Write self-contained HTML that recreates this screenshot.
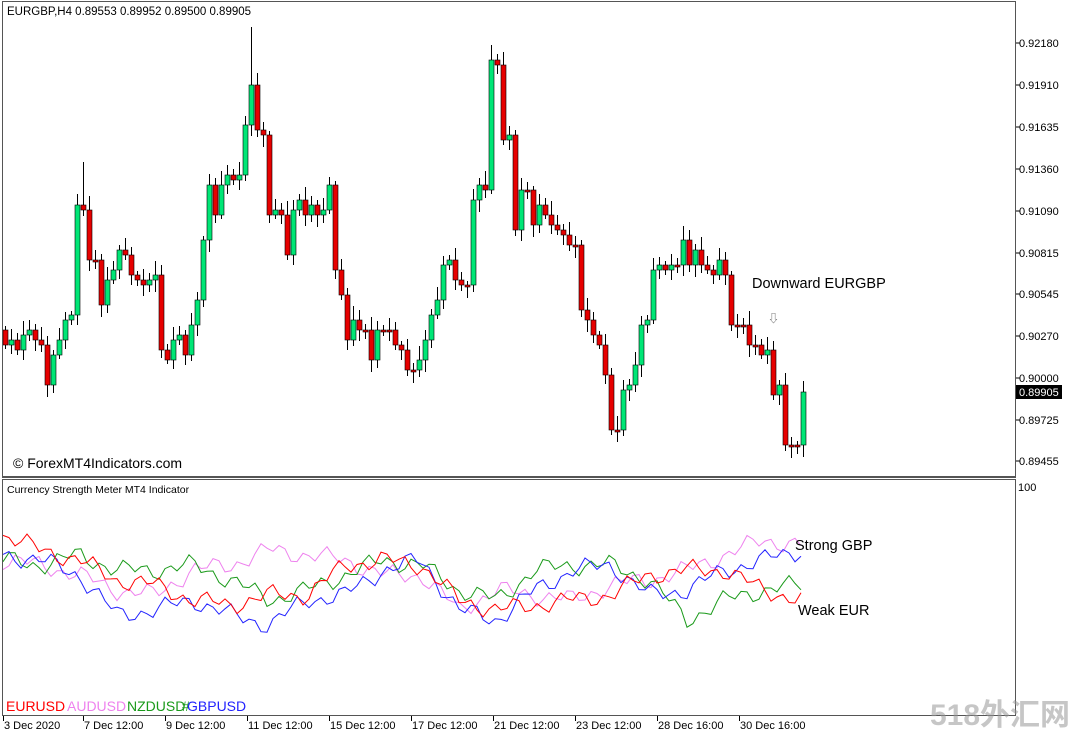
<!DOCTYPE html>
<html><head><meta charset="utf-8"><style>
html,body{margin:0;padding:0;background:#fff;width:1068px;height:736px;overflow:hidden}
svg{display:block}
text{font-family:"Liberation Sans","Noto Sans CJK SC",sans-serif}
</style></head><body>
<svg id="s" width="1068" height="736" xmlns="http://www.w3.org/2000/svg">
<rect width="1068" height="736" fill="#fff"/>
<g id="c"></g>
<g id="ind"></g>
<rect x="2.5" y="1.5" width="1013" height="475" fill="none" stroke="#555" stroke-width="1"/>
<rect x="2.5" y="479.5" width="1013" height="236" fill="none" stroke="#555" stroke-width="1"/>
<line x1="2" y1="477.5" x2="1016" y2="477.5" stroke="#555"/>
<text x="7" y="15" font-size="11.5" fill="#000">EURGBP,H4  0.89553 0.89952 0.89500 0.89905</text>
<text x="13" y="468" font-size="14" fill="#000">© ForexMT4Indicators.com</text>
<text x="752" y="288" font-size="14.5" fill="#000">Downward EURGBP</text>
<text x="768" y="322" font-size="11" fill="#555">⇩</text>
<text x="7" y="493" font-size="10.5" fill="#000">Currency Strength Meter MT4 Indicator</text>
<text x="795" y="550" font-size="14.5" fill="#000">Strong GBP</text>
<text x="798" y="615" font-size="14.5" fill="#000">Weak EUR</text>
<text x="6" y="711" font-size="14" fill="#f00">EURUSD</text>
<text x="67" y="711" font-size="14" fill="#ee82ee">AUDUSD</text>
<text x="127" y="711" font-size="14" fill="#1a9a1a">NZDUSD</text>
<text x="182" y="711" font-size="14" fill="#1a9a1a">#</text>
<text x="187" y="711" font-size="14" fill="#22f">GBPUSD</text>
<g id="ax" font-size="11" fill="#000"></g>
<rect x="1016" y="385" width="46" height="14" fill="#000"/>
<text x="1019" y="396" font-size="11" fill="#fff">0.89905</text>
<text x="1018" y="491" font-size="11" fill="#000">100</text>
<text x="930" y="725" font-size="30" fill="#999" opacity="0.55" font-weight="bold">518外汇网</text>
</svg>
<script>
(function(){
var NS="http://www.w3.org/2000/svg";
function el(p,t,a,tx){var e=document.createElementNS(NS,t);for(var q in a)e.setAttribute(q,a[q]);if(tx)e.textContent=tx;p.appendChild(e);return e;}
var closes=[345,340,350,335,330,340,345,385,355,340,320,315,205,210,260,260,305,280,270,250,255,275,280,285,280,275,350,360,340,335,355,325,300,240,185,215,185,175,180,175,125,85,130,135,215,210,215,255,210,200,215,205,215,210,185,270,295,340,320,330,330,360,330,330,330,345,350,370,370,360,340,315,300,265,260,280,285,285,200,185,190,60,65,140,135,230,190,190,225,205,215,225,230,235,245,245,310,320,335,345,375,430,430,390,385,365,325,320,270,265,270,265,265,240,265,250,265,270,275,260,275,325,325,325,345,345,355,350,395,385,445,445,445,392];
var c=document.getElementById("c");var prev=330;
for(var i=0;i<closes.length;i++){var x=5+i*6,cl=closes[i],op=prev;var bt=Math.min(op,cl),bb=Math.max(op,cl);if(bb-bt<2)bb=bt+2;
var hi=bt-4-((i*7)%11),lo=bb+4+((i*5)%9);if(i==41)hi=27;if(i==81)hi=45;if(i==13)hi=162;
el(c,"line",{x1:x+.5,y1:hi,x2:x+.5,y2:lo,stroke:"#000","stroke-width":1});
el(c,"rect",{x:x-2,y:bt,width:5,height:bb-bt,fill:cl<op?"#00e676":"#e60000",stroke:"#000","stroke-width":.6});prev=cl;}
var ind=document.getElementById("ind");
function line(col,pts,seed){var d="";var n=134;for(var i=0;i<n;i++){var t=i/(n-1)*(pts.length-1);var k=Math.floor(t),f=t-k;var a=pts[k],b=pts[Math.min(k+1,pts.length-1)];var y=a+(b-a)*f+Math.sin(i*1.7+seed)*6+Math.sin(i*0.63+seed*2)*5;d+=(i?"L":"M")+(3+i*6)+" "+y.toFixed(1);}el(ind,"path",{d:d,fill:"none",stroke:col,"stroke-width":1});}
line("#ee82ee",[560,565,575,590,595,570,565,550,555,560,575,575,610,590,595,600,585,580,570,555,540,545],1);
line("#1a9a1a",[560,565,555,570,570,565,580,600,590,575,560,565,590,600,570,565,565,580,620,600,590,585],2);
line("#22f",[555,560,575,615,610,600,615,625,600,595,570,560,610,620,590,570,565,595,590,570,560,550],3);
line("#f00",[535,550,560,580,585,600,605,595,595,565,560,565,600,610,605,600,595,575,570,570,590,600],4);
var ax=document.getElementById("ax");
var pr=[["0.92180",43],["0.91910",85],["0.91635",127],["0.91360",169],["0.91090",211],["0.90815",253],["0.90545",294],["0.90270",336],["0.90000",378],["0.89725",420],["0.89455",461]];
pr.forEach(function(p){el(ax,"line",{x1:1016,y1:p[1],x2:1020,y2:p[1],stroke:"#000"});el(ax,"text",{x:1019,y:p[1]+4},p[0]);});
var tl=[["3 Dec 2020",3],["7 Dec 12:00",83],["9 Dec 12:00",165],["11 Dec 12:00",247],["15 Dec 12:00",329],["17 Dec 12:00",411],["21 Dec 12:00",493],["23 Dec 12:00",575],["28 Dec 16:00",657],["30 Dec 16:00",739]];
tl.forEach(function(p){el(ax,"line",{x1:p[1]+.5,y1:716,x2:p[1]+.5,y2:721,stroke:"#000"});el(ax,"text",{x:p[1]+1,y:729},p[0]);});
})();
</script>
</body></html>
